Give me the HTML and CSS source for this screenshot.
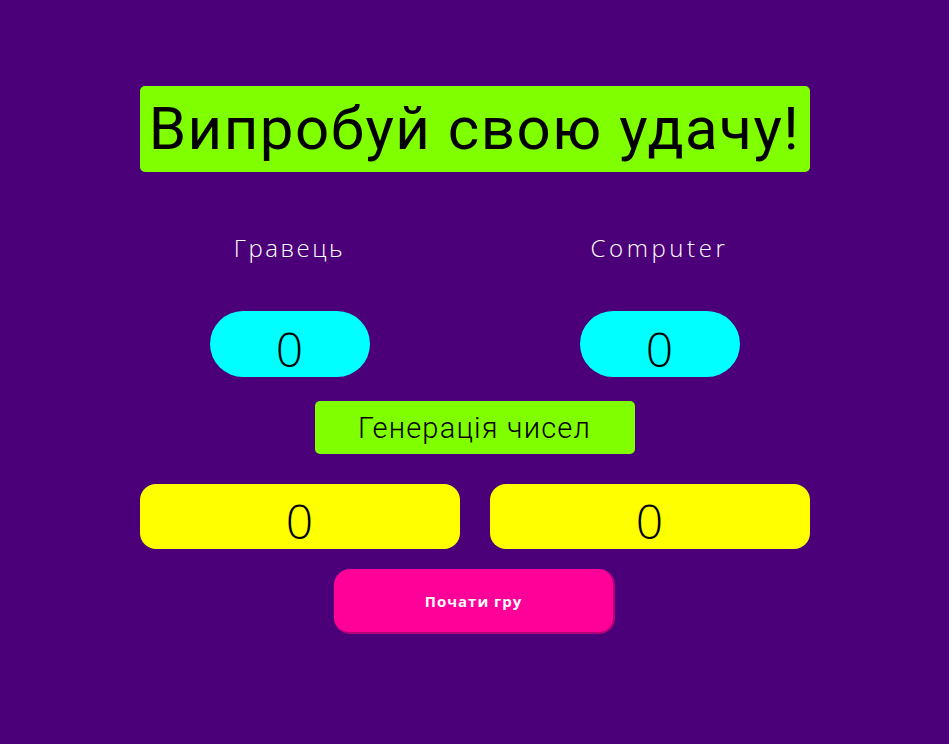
FILE: index.html
```html
<!DOCTYPE html>
<html lang="uk">
<head>
<meta charset="utf-8">
<title>Випробуй свою удачу!</title>
<link rel="stylesheet" href="styles.css">
</head>
<body>
<main class="game">
  <h1 class="title">Випробуй свою удачу!</h1>
  <div class="players">
    <div class="player">
      <div class="player-name">Гравець</div>
      <div class="score">0</div>
    </div>
    <div class="player">
      <div class="player-name player-name-latin">Computer</div>
      <div class="score">0</div>
    </div>
  </div>
  <div class="generate">Генерація чисел</div>
  <div class="numbers">
    <div class="number">0</div>
    <div class="number">0</div>
  </div>
  <button class="start" type="button">Почати гру</button>
</main>
</body>
</html>
```
FILE: styles.css
```css
html, body {
  margin: 0;
  padding: 0;
}
body {
  background: #4b007a;
  height: 744px;
  font-family: "Open Sans", "Roboto", sans-serif;
}
.game {
  width: 670px;
  margin: 0 auto;
  padding-top: 86px;
  display: flex;
  flex-direction: column;
  align-items: center;
}
.title {
  margin: 0;
  width: 100%;
  height: 86px;
  box-sizing: border-box;
  background: #80ff00;
  border-radius: 5px;
  font-family: "Roboto", sans-serif;
  font-weight: 400;
  font-size: 60px;
  line-height: 86px;
  text-align: center;
  color: #000;
  letter-spacing: 1.5px;
}
.players {
  width: 100%;
  display: flex;
  justify-content: space-between;
  margin-top: 61px;
}
.player {
  width: 300px;
  display: flex;
  flex-direction: column;
  align-items: center;
}
.player-name {
  color: #fff;
  font-family: "Open Sans", sans-serif;
  font-weight: 300;
  font-size: 24px;
  line-height: 30px;
  letter-spacing: 2.5px;
}
.player-name-latin {
  letter-spacing: 3.6px;
}
.score {
  margin-top: 48px;
  width: 160px;
  height: 66px;
  border-radius: 33px;
  background: #00ffff;
  color: #000;
  display: flex;
  align-items: center;
  justify-content: center;
  font-family: "Open Sans", sans-serif;
  font-weight: 300;
  font-size: 48px;
  padding-top: 8px;
  box-sizing: border-box;
}
.generate {
  margin-top: 24px;
  width: 320px;
  height: 53px;
  border-radius: 5px;
  background: #80ff00;
  color: #000;
  display: flex;
  align-items: center;
  justify-content: center;
  font-family: "Roboto", sans-serif;
  font-weight: 300;
  font-size: 29px;
  letter-spacing: 1.2px;
}
.numbers {
  margin-top: 30px;
  width: 100%;
  display: flex;
  gap: 30px;
}
.number {
  flex: 1;
  height: 65px;
  border-radius: 16px;
  background: #ffff00;
  color: #000;
  display: flex;
  align-items: center;
  justify-content: center;
  font-family: "Open Sans", sans-serif;
  font-weight: 300;
  font-size: 48px;
  padding-top: 8px;
  box-sizing: border-box;
}
.start {
  margin-top: 20px;
  width: 281px;
  height: 65px;
  border-radius: 16px;
  background: #ff0099;
  border: none;
  border-right: 2px solid #b3007a;
  border-bottom: 2px solid #b3007a;
  color: #fff;
  font-family: "Open Sans", sans-serif;
  font-weight: 700;
  font-size: 15px;
  letter-spacing: 1px;
  cursor: pointer;
}
```
